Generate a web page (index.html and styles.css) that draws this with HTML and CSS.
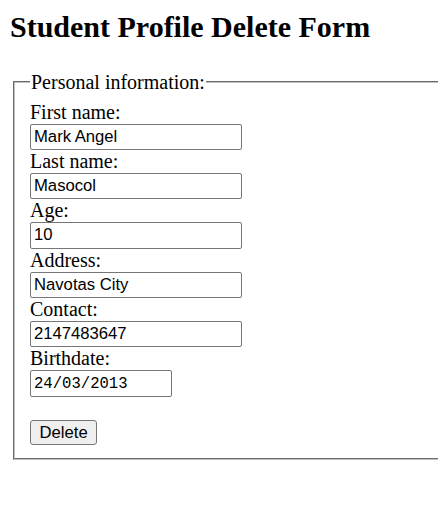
FILE: index.html
```html
<!DOCTYPE html>
<html lang="en">
<head>
<meta charset="utf-8">
<title>Student Profile Delete Form</title>
<link rel="stylesheet" href="styles.css">
</head>
<body>
<h2 class="title">Student Profile Delete Form</h2>
<form class="form">
  <fieldset class="group">
    <legend class="group-title">Personal information:</legend>
    <div class="field">
      <label class="label" for="fname">First name:</label>
      <input class="input" id="fname" type="text" value="Mark Angel">
    </div>
    <div class="field">
      <label class="label" for="lname">Last name:</label>
      <input class="input" id="lname" type="text" value="Masocol">
    </div>
    <div class="field">
      <label class="label" for="age">Age:</label>
      <input class="input" id="age" type="text" value="10">
    </div>
    <div class="field">
      <label class="label" for="address">Address:</label>
      <input class="input" id="address" type="text" value="Navotas City">
    </div>
    <div class="field">
      <label class="label" for="contact">Contact:</label>
      <input class="input" id="contact" type="text" value="2147483647">
    </div>
    <div class="field">
      <label class="label" for="bdate">Birthdate:</label>
      <input class="input input-date" id="bdate" type="text" value="24/03/2013">
    </div>
    <div class="actions">
      <button class="btn" type="button">Delete</button>
    </div>
  </fieldset>
</form>
</body>
</html>
```
FILE: styles.css
```css
html {
  overflow: hidden;
}

body {
  margin: 10px;
  font-family: "Liberation Serif", "Times New Roman", serif;
  font-size: 20px;
  color: #000;
  background: #fff;
}

.title {
  margin: 0 0 26px;
  font-size: 30px;
  font-weight: bold;
  line-height: 34.5px;
}

.form {
  margin: 0;
}

.group {
  width: 520px;
  margin: 0 0 0 3px;
  padding: 7px 0 12.5px 15px;
  border: 2px groove #c0c0c0;
  display: flex;
  flex-direction: column;
}

.group-title {
  margin-left: 0;
  padding: 0 1px;
  line-height: 23px;
}

.field {
  display: flex;
  flex-direction: column;
  align-items: flex-start;
}

.label {
  line-height: 23px;
}

.input {
  box-sizing: border-box;
  width: 212px;
  height: 26.4px;
  margin: 0;
  padding: 0 3px;
  border: 1px solid #767676;
  border-radius: 2px;
  font-family: "Liberation Sans", Arial, sans-serif;
  font-size: 16.67px;
  color: #000;
  background: #fff;
}

.input-date {
  width: 142px;
  font-family: "Liberation Mono", "DejaVu Sans Mono", monospace;
  font-size: 15.6px;
}

.actions {
  display: flex;
  padding-top: 23px;
}

.btn {
  box-sizing: border-box;
  height: 25.6px;
  padding: 0 8.5px;
  border: 1px solid #767676;
  border-radius: 3px;
  background: #efefef;
  font-family: "Liberation Sans", Arial, sans-serif;
  font-size: 16.67px;
  color: #000;
}
```
